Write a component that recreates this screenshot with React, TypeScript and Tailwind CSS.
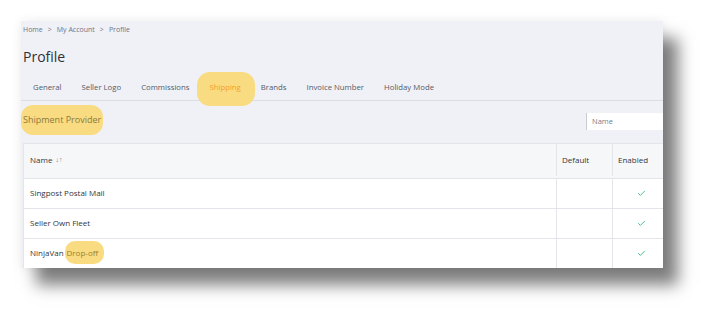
import { Check } from "lucide-react";

const tabs = ["General", "Seller Logo", "Commissions", "Shipping", "Brands", "Invoice Number", "Holiday Mode"];

const rows = [
  { name: "Singpost Postal Mail" },
  { name: "Seller Own Fleet" },
  { name: "NinjaVan", tag: "Drop-off" },
];

export default function App() {
  return (
    <div className="h-[310px] w-[705px] bg-white pl-[21px] pt-[21px] font-['Open_Sans',sans-serif]">
      <div className="h-[247px] w-[642px] overflow-hidden bg-[#f0f1f6] shadow-[15px_17px_15px_0_rgba(0,0,0,0.5),0_0_10px_rgba(0,0,0,0.08)]">
        {/* BREADCRUMB */}
        <div className="flex h-[16px] items-center gap-[5px] pl-[2px] pt-[2px] text-[7px] text-[#6f7487]">
          <span>Home</span>
          <span>&gt;</span>
          <span>My Account</span>
          <span>&gt;</span>
          <span>Profile</span>
        </div>

        <h1 className="mt-[11px] pl-[2px] text-[14px] leading-[18px] text-[#2f3136]">Profile</h1>

        {/* TABS */}
        <div className="mt-[9px] flex h-[26px] items-center border-b border-[#dcdde3] pl-[2px] text-[7.75px] text-[#555a66]">
          {tabs.map((t) =>
            t === "Shipping" ? (
              <div key={t} className="relative px-[10px]">
                <span className="absolute -left-[2px] -right-[4px] -top-[10px] h-[34px] rounded-[13px] bg-[#f9dc82]"></span>
                <span className="relative text-[#f5a02a]">{t}</span>
              </div>
            ) : (
              <div key={t} className="px-[10px]">
                {t}
              </div>
            )
          )}
        </div>

        {/* SECTION HEADER */}
        <div className="relative z-10 flex h-[42px] items-start justify-between">
          <div className="mt-[4px] flex h-[30px] items-center rounded-[12px] bg-[#f9dc82] px-[2px] pb-[1px] text-[9px] text-[#8a7a3e]">
            Shipment Provider
          </div>
          <div className="mt-[12px] flex h-[17px] w-[77px] items-center border-l border-[#c9ccd4] bg-white pl-[5px] text-[7.5px] text-[#7a7f8c]">
            Name
          </div>
        </div>

        {/* TABLE */}
        <div className="ml-[2px] w-[660px] border-l border-[#e4e5ea] text-[8px] text-[#33363d]">
          <div className="flex h-[35px] border-t border-[#e4e5ea] bg-[#f6f7f9] pb-[2px]">
            <div className="flex w-[533px] items-center gap-[3px] border-r border-[#e4e5ea] pl-[6px]">
              Name <span className="text-[7px] text-[#777]">↓↑</span>
            </div>
            <div className="flex w-[56px] items-center border-r border-[#e4e5ea] pl-[5px]">Default</div>
            <div className="flex flex-1 items-center pl-[5px]">Enabled</div>
          </div>
          {rows.map((r) => (
            <div key={r.name} className="flex h-[30px] border-t border-[#e4e5ea] bg-white">
              <div className="flex w-[533px] items-center border-r border-[#e4e5ea] pb-[2px] pl-[6px]">
                {r.name}
                {r.tag && (
                  <span className="ml-[1px] flex h-[23px] items-center rounded-[10px] bg-[#f9dc82] pl-[2px] pr-[6px] text-[#9a7f2c]">
                    {r.tag}
                  </span>
                )}
              </div>
              <div className="w-[56px] border-r border-[#e4e5ea]"></div>
              <div className="flex flex-1 items-center pb-[1px] pl-[24px]">
                <Check size={9} strokeWidth={2.5} className="text-[#3fbf7f]" />
              </div>
            </div>
          ))}
        </div>
      </div>
    </div>
  );
}
